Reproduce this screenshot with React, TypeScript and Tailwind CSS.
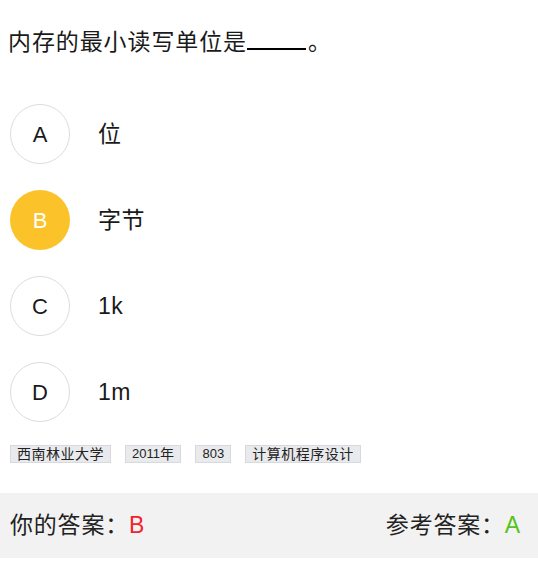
import React from "react";

const font = { fontFamily: '"Liberation Sans", "Noto Sans CJK SC", sans-serif' };

const options = [
  { k: "A", t: "位" },
  { k: "B", t: "字节", sel: true },
  { k: "C", t: "1k" },
  { k: "D", t: "1m" },
];

const tags = ["西南林业大学", "2011年", "803", "计算机程序设计"];

function TagText({ t }: { t: string }) {
  const parts = t.match(/[0-9A-Za-z]+|[^0-9A-Za-z]+/g) || [];
  return (
    <>
      {parts.map((p, i) =>
        /[0-9A-Za-z]/.test(p) ? (
          <span key={i} className="text-[13px]">{p}</span>
        ) : (
          <span key={i} className="text-[14px] tracking-[0.5px]">{p}</span>
        )
      )}
    </>
  );
}

export default function App() {
  return (
    <div className="w-[538px] h-[568px] bg-white text-[#1a1a1a]" style={font}>
      <div className="pt-[28px] pl-[8px] text-[23px] tracking-[0.9px] leading-[28px]">
        内存的最小读写单位是
        <span className="inline-block w-[59px] border-b-2 border-black align-baseline h-[18px] mr-[2px]"></span>
        。
      </div>
      <div className="mt-[48px] pl-[10px] flex flex-col gap-[26px]">
        {options.map((o) => (
          <div key={o.k} className="flex items-center">
            <div
              className={
                o.sel
                  ? "w-[60px] h-[60px] rounded-full bg-[#fcc22a] text-white flex items-center justify-center text-[22px]"
                  : "w-[60px] h-[60px] rounded-full border border-[#dddddd] text-[#1a1a1a] flex items-center justify-center text-[22px]"
              }
            >
              {o.k}
            </div>
            <div className="ml-[28px] text-[23px] tracking-[0.5px]">{o.t}</div>
          </div>
        ))}
      </div>
      <div className="mt-[23px] pl-[10px] flex gap-[14px]">
        {tags.map((t) => (
          <span
            key={t}
            className="h-[18px] px-[6px] bg-[#e9eaed] border border-[#d8d9dc] leading-[16px] text-[#222] flex items-center"
          >
            <TagText t={t} />
          </span>
        ))}
      </div>
      <div className="mt-[30px] h-[65px] bg-[#f2f2f2] flex items-center justify-between pl-[10px] pr-[17px] text-[23px] tracking-[0.8px] text-[#222]">
        <div>
          你的答案：<span className="text-[#f5222d]">B</span>
        </div>
        <div>
          参考答案：<span className="text-[#52c41a]">A</span>
        </div>
      </div>
    </div>
  );
}
